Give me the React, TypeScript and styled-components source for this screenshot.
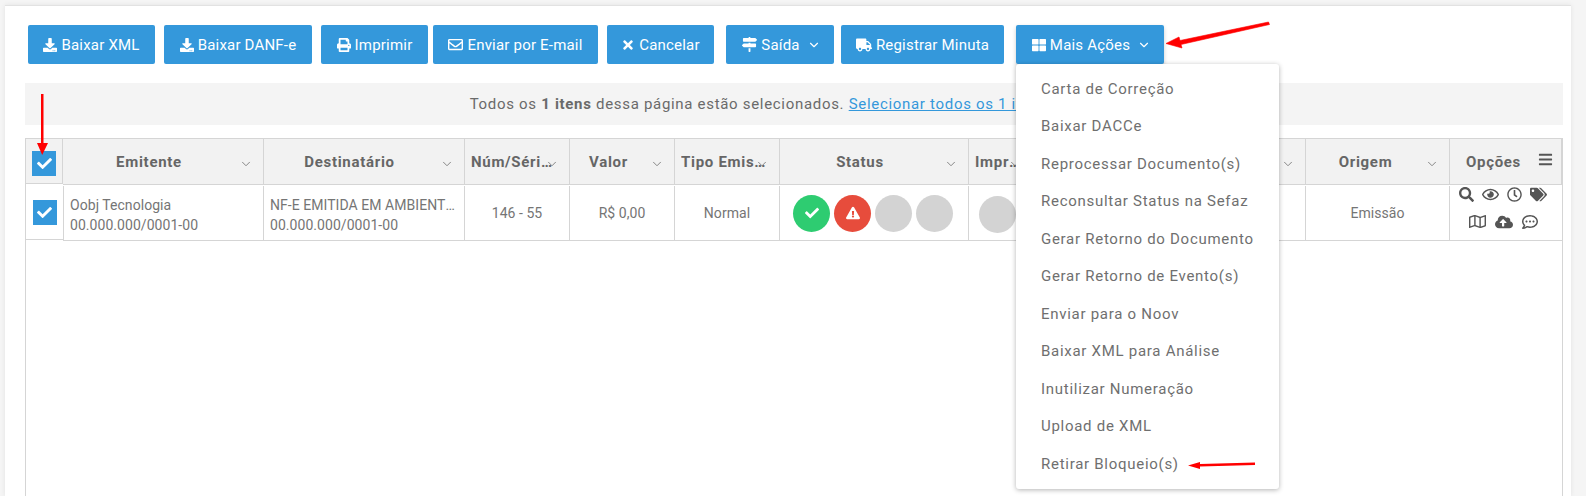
import React from "react";
import styled, { createGlobalStyle } from "styled-components";
import {
  FaDownload, FaPrint, FaRegEnvelope, FaTimes, FaMapSigns, FaTruck, FaThLarge, FaCheck,
  FaExclamationTriangle, FaSearch, FaRegEye, FaRegClock, FaTags, FaRegMap, FaCloudUploadAlt,
  FaRegCommentDots, FaBars,
} from "react-icons/fa";
import { ChevronDown } from "lucide-react";

const Global = createGlobalStyle`
  html, body { margin: 0; padding: 0; background: #f5f5f5; overflow: hidden; }
  * { box-sizing: border-box; }
`;

const Page = styled.div`
  position: relative;
  width: 1586px;
  height: 496px;
  padding: 5px 15px 0 5px;
  display: flex;
  font-family: Roboto, "Liberation Sans", sans-serif;
  color: #666;
`;

const Panel = styled.main`
  flex: 1;
  display: flex;
  flex-direction: column;
  background: #fff;
  border-top: 1px solid #e2e2e2;
  padding: 19px 8px 0 20px;
  box-shadow: 0 0 5px rgba(0, 0, 0, 0.08);
`;

const Toolbar = styled.div`
  display: flex;
  padding-left: 3px;
  height: 39px;
`;

const ButtonSlot = styled.div<{ $gap: number }>`
  position: relative;
  margin-left: ${(p) => p.$gap}px;
  display: flex;
`;

const Button = styled.button<{ $w: number; $raised?: boolean; $chev?: boolean }>`
  width: ${(p) => p.$w}px;
  height: 39px;
  border: 0;
  border-radius: 2px;
  background: #3498db;
  color: #fff;
  font: 400 15px Roboto, sans-serif;
  letter-spacing: 0.2px;
  display: flex;
  align-items: center;
  justify-content: center;
  gap: 4px;
  padding: 0 0 0 ${(p) => (p.$chev ? 3 : 0)}px;
  white-space: nowrap;
  box-shadow: ${(p) => (p.$raised ? "0 2px 4px rgba(0,0,0,.2)" : "none")};
`;

const ButtonChevron = styled(ChevronDown)`
  margin-left: 3px;
`;

const Menu = styled.ul`
  position: absolute;
  left: 0;
  top: 39px;
  width: 263px;
  height: 425px;
  margin: 0;
  padding: 6px 0 0;
  list-style: none;
  background: #fff;
  border-radius: 3px;
  box-shadow: 0 1px 5px rgba(0, 0, 0, 0.3);
  z-index: 5;
`;

const MenuItem = styled.li`
  height: 37.5px;
  padding-left: 25px;
  display: flex;
  align-items: center;
  font-size: 15px;
  letter-spacing: 0.72px;
  color: #6f6f6f;
`;

const Banner = styled.div`
  margin-top: 19px;
  height: 42px;
  background: #f4f4f4;
  display: flex;
  align-items: center;
  justify-content: center;
  font-size: 15px;
  letter-spacing: 0.69px;
  color: #6a6a6a;
  white-space: pre;
`;

const BannerLink = styled.a`
  color: #3498db;
  text-decoration: underline;
`;

const TableBox = styled.div`
  margin-top: 13px;
  flex: 1;
  border: 1px solid #d5d5d5;
  border-bottom: 0;
  display: grid;
  grid-template-columns: 37px 201px 201px 105px 105px 105px 189px 64px 273px 144px 112px;
  grid-template-rows: 46px 56px;
  align-content: start;
`;

const HeadCell = styled.div`
  position: relative;
  background: #f2f2f2;
  border-right: 1px solid #d5d5d5;
  border-bottom: 1px solid #d5d5d5;
  display: flex;
  align-items: center;
  padding: 1px 10px 0 6px;
  font-size: 15px;
  font-weight: 700;
  letter-spacing: 0.7px;
  color: #666;
  &:last-child { border-right: 0; }
`;

const HeadSelect = styled.div`
  background: #f2f2f2;
  border-right: 1px solid #d5d5d5;
  border-bottom: 1px solid #d5d5d5;
  margin-bottom: 1px;
  display: flex;
  align-items: center;
  justify-content: center;
  padding: 4px 0 0 0;
`;

const HeadTitle = styled.span<{ $pad: number }>`
  flex: 1;
  min-width: 0;
  margin-right: ${(p) => p.$pad}px;
  text-align: center;
  overflow: hidden;
  white-space: nowrap;
  text-overflow: ellipsis;
`;

const HeadChevron = styled(ChevronDown)`
  position: absolute;
  right: 10px;
  top: 18px;
  color: #777;
`;

const MenuBars = styled(FaBars)`
  position: absolute;
  right: 8px;
  top: 13px;
  font-size: 15px;
  color: #555;
`;

const RowSelect = styled.div`
  border-bottom: 1px solid #d5d5d5;
  margin-bottom: 1px;
  display: flex;
  align-items: center;
  justify-content: center;
  padding: 1px 0 0 0;
`;

const Checkbox = styled.span`
  width: 24px;
  height: 25px;
  background: #3498db;
  color: #fff;
  display: flex;
  align-items: center;
  justify-content: center;
  font-size: 15px;
`;

const Cell = styled.div`
  margin-top: 1px;
  border-right: 1px solid #d5d5d5;
  border-bottom: 1px solid #d5d5d5;
  display: flex;
  flex-direction: column;
  justify-content: center;
  padding: 0 6px;
  font-size: 14px;
  line-height: 20px;
  letter-spacing: 0.05px;
  color: #757575;
  text-align: center;
  min-width: 0;
  &:last-child { border-right: 0; }
`;

const TextCell = styled(Cell)<{ $first?: boolean }>`
  text-align: left;
  padding-top: 3px;
  border-left: ${(p) => (p.$first ? "1px solid #d5d5d5" : "0")};
`;

const Clip = styled.span`
  overflow: hidden;
  white-space: nowrap;
  text-overflow: ellipsis;
`;

const Circles = styled.div`
  display: flex;
  gap: 4px;
  padding-left: 13px;
`;

const Circle = styled.span<{ $c: string }>`
  width: 37px;
  height: 37px;
  border-radius: 50%;
  background: ${(p) => p.$c};
  color: #fff;
  font-size: 14px;
  display: flex;
  align-items: center;
  justify-content: center;
`;

const CircleCell = styled(Cell)`
  padding: 0;
  align-items: flex-start;
`;

const PrintCircles = styled(Circles)`
  padding-left: 10px;
  padding-top: 2px;
`;

const OptionCell = styled(Cell)`
  padding: 0 6px 0 0;
  justify-content: flex-start;
  color: #555;
`;

const IconRow = styled.div<{ $gap: number; $h: number }>`
  display: flex;
  justify-content: center;
  align-items: center;
  gap: ${(p) => p.$gap}px;
  height: ${(p) => p.$h}px;
  font-size: 15px;
`;

const Arrows = styled.svg`
  position: absolute;
  inset: 0;
  pointer-events: none;
  z-index: 10;
`;

const buttons: { w: number; gap: number; icon: React.ReactNode; text: string; chev?: boolean }[] = [
  { w: 127, gap: 0, icon: <FaDownload size={14} />, text: "Baixar XML" },
  { w: 148, gap: 9, icon: <FaDownload size={14} />, text: "Baixar DANF-e" },
  { w: 107, gap: 9, icon: <FaPrint size={14} />, text: "Imprimir" },
  { w: 165, gap: 5, icon: <FaRegEnvelope size={15} />, text: "Enviar por E-mail" },
  { w: 107, gap: 9, icon: <FaTimes size={14} />, text: "Cancelar" },
  { w: 108, gap: 12, icon: <FaMapSigns size={15} />, text: "Saída", chev: true },
  { w: 163, gap: 7, icon: <FaTruck size={16} />, text: "Registrar Minuta" },
];

const menu = [
  "Carta de Correção", "Baixar DACCe", "Reprocessar Documento(s)", "Reconsultar Status na Sefaz",
  "Gerar Retorno do Documento", "Gerar Retorno de Evento(s)", "Enviar para o Noov",
  "Baixar XML para Análise", "Inutilizar Numeração", "Upload de XML", "Retirar Bloqueio(s)",
];

const heads: { t: string; pad: number }[] = [
  { t: "Emitente", pad: 24 },
  { t: "Destinatário", pad: 25 },
  { t: "Núm/Série NF", pad: 4 },
  { t: "Valor", pad: 23 },
  { t: "Tipo Emissão", pad: 0 },
  { t: "Status", pad: 24 },
  { t: "Impressão", pad: 0 },
  { t: "", pad: 0 },
  { t: "Origem", pad: 20 },
];

export default function App() {
  return (
    <Page>
      <Global />
      <Panel>
        <Toolbar>
          {buttons.map((b) => (
            <ButtonSlot key={b.text} $gap={b.gap}>
              <Button $w={b.w} $chev={b.chev}>
                {b.icon}
                {b.text}
                {b.chev && <ButtonChevron size={14} />}
              </Button>
            </ButtonSlot>
          ))}
          <ButtonSlot $gap={12}>
            <Button $w={148} $raised $chev>
              <FaThLarge size={14} />
              Mais Ações
              <ButtonChevron size={14} />
            </Button>
            <Menu>
              {menu.map((m) => (
                <MenuItem key={m}>{m}</MenuItem>
              ))}
            </Menu>
          </ButtonSlot>
        </Toolbar>
        <Banner>
          Todos os <b>1 itens</b> dessa página estão selecionados.{" "}
          <BannerLink>Selecionar todos os 1 itens da busca</BannerLink>
        </Banner>
        <TableBox>
          <HeadSelect>
            <Checkbox><FaCheck /></Checkbox>
          </HeadSelect>
          {heads.map((h, i) => (
            <HeadCell key={i}>
              <HeadTitle $pad={h.pad}>{h.t}</HeadTitle>
              <HeadChevron size={14} strokeWidth={1.5} />
            </HeadCell>
          ))}
          <HeadCell>
            <HeadTitle $pad={20}>Opções</HeadTitle>
            <MenuBars />
          </HeadCell>

          <RowSelect>
            <Checkbox><FaCheck /></Checkbox>
          </RowSelect>
          <TextCell $first>
            <Clip>Oobj Tecnologia</Clip>
            <Clip>00.000.000/0001-00</Clip>
          </TextCell>
          <TextCell>
            <Clip>NF-E EMITIDA EM AMBIENTE DE HOMOLOGAÇÃO</Clip>
            <Clip>00.000.000/0001-00</Clip>
          </TextCell>
          <Cell>146 - 55</Cell>
          <Cell>R$ 0,00</Cell>
          <Cell>Normal</Cell>
          <CircleCell>
            <Circles>
              <Circle $c="#2ecc71"><FaCheck /></Circle>
              <Circle $c="#e74c3c"><FaExclamationTriangle /></Circle>
              <Circle $c="#d3d3d3" />
              <Circle $c="#d3d3d3" />
            </Circles>
          </CircleCell>
          <CircleCell>
            <PrintCircles>
              <Circle $c="#d3d3d3" />
            </PrintCircles>
          </CircleCell>
          <Cell />
          <Cell>Emissão</Cell>
          <OptionCell>
            <IconRow $gap={8} $h={18}>
              <FaSearch />
              <FaRegEye size={17} />
              <FaRegClock />
              <FaTags size={17} />
            </IconRow>
            <IconRow $gap={9} $h={40}>
              <FaRegMap size={17} />
              <FaCloudUploadAlt size={18} />
              <FaRegCommentDots size={16} />
            </IconRow>
          </OptionCell>
        </TableBox>
      </Panel>
      <Arrows width="1586" height="496" viewBox="0 0 1586 496">
        <path d="M1268.5 22 L1269.5 24.5 L1181 44.5 L1182 48 L1166 43.5 L1179 37 L1180 40.5 Z" fill="#f00" stroke="#f00" strokeWidth="0.6" strokeLinejoin="round" />
        <path d="M41 94 H43.5 V143 H48 L42.2 155 L37 143 H41 Z" fill="#f00" />
        <path d="M1255 462.5 L1255 465 L1200 466.5 L1200 469 L1188 465.5 L1200 462 L1200 464 Z" fill="#f00" />
      </Arrows>
    </Page>
  );
}
